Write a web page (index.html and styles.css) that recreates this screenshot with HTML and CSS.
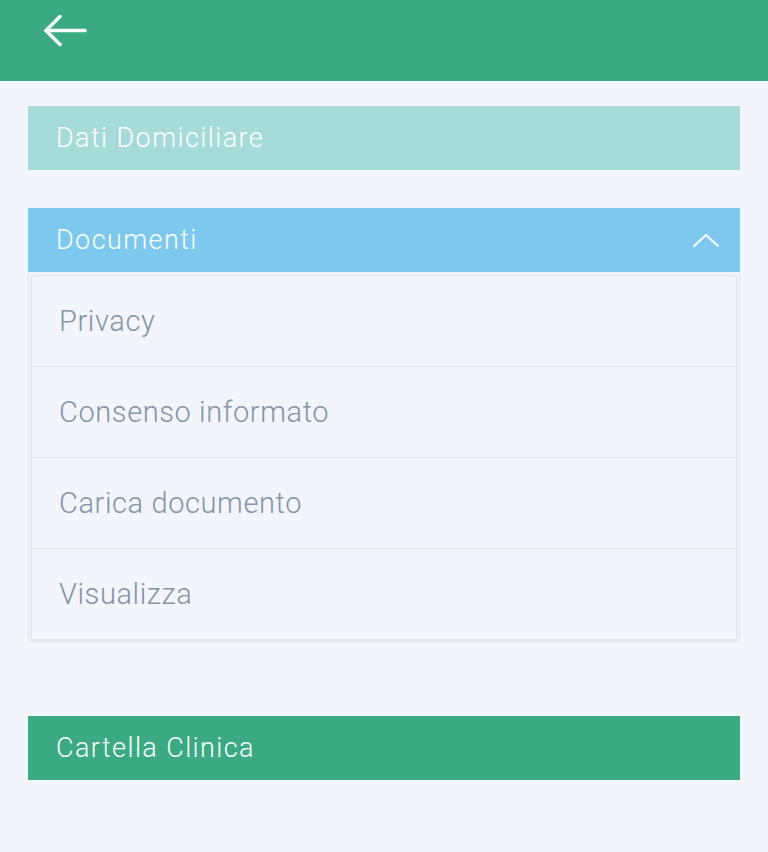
FILE: index.html
```html
<!DOCTYPE html>
<html lang="it">
<head>
  <meta charset="UTF-8" />
  <meta name="viewport" content="width=device-width, initial-scale=1.0"/>
  <title>Documenti</title>
  <link rel="stylesheet" href="styles.css">
</head>
<body>
  <header class="topbar">
    <div class="back">
      <svg width="44" height="32" viewBox="0 0 44 32" fill="none" stroke="#ffffff" stroke-width="3.5" stroke-linecap="round" stroke-linejoin="round">
        <path d="M42 15.5H3"/>
        <path d="M17 1.5L3 15.5l14 14"/>
      </svg>
    </div>
  </header>

  <main class="content">
    <div class="section section-teal">Dati Domiciliare</div>

    <div class="group">
      <div class="section section-blue">
        <span>Documenti</span>
        <svg width="28" height="16" viewBox="0 0 28 16" fill="none" stroke="#ffffff" stroke-width="2.2" stroke-linecap="round" stroke-linejoin="round">
          <path d="M2 14L14 3l12 11"/>
        </svg>
      </div>
      <div class="list-wrap">
        <ul class="list">
          <li>Privacy</li>
          <li>Consenso informato</li>
          <li>Carica documento</li>
          <li>Visualizza</li>
        </ul>
      </div>
    </div>

    <div class="section section-green">Cartella Clinica</div>
  </main>
</body>
</html>
```

FILE: styles.css
```css
body {
  margin: 0;
  padding: 0;
  background-color: #f2f6fc;
  font-family: Roboto, "Liberation Sans", sans-serif;
  font-weight: 300;
  min-height: 852px;
}
.topbar {
  height: 81px;
  background-color: #39aa81;
  display: flex;
  align-items: flex-start;
}
.back {
  padding: 15px 0 0 43px;
  height: 32px;
}
.content {
  padding: 25px 28px 0 28px;
}
.section {
  height: 64px;
  display: flex;
  align-items: center;
  justify-content: space-between;
  padding: 0 20px 0 28px;
  color: #ffffff;
  font-size: 27px;
  letter-spacing: 1.4px;
  box-sizing: border-box;
}
.section-teal {
  background-color: #a5dbd8;
}
.section-blue {
  background-color: #7cc8ee;
}
.section-green {
  background-color: #39aa81;
}
.group {
  margin-top: 38px;
}
.list-wrap {
  border: 1px solid #e2e8f0;
  border-top: none;
  padding: 3px 2px 1px 2px;
}
.list {
  list-style: none;
  margin: 0;
  padding: 0;
  border: 1px solid #dfe5ee;
  border-radius: 3px;
  box-shadow: 0 1px 2px rgba(0,0,0,0.06);
}
.list li {
  height: 90px;
  display: flex;
  align-items: center;
  padding-left: 27px;
  font-size: 29px;
  letter-spacing: 0.6px;
  color: #8294a8;
  border-top: 1px solid #dfe5ee;
}
.list li:first-child {
  border-top: none;
}
.group + .section {
  margin-top: 74px;
}
```
